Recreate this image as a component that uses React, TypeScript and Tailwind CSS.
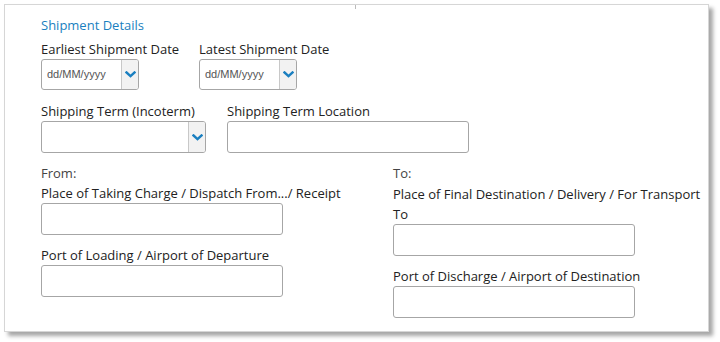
import React from "react";

function Chevron() {
    return (
        <svg width="11" height="7" viewBox="0 0 11 7" fill="none">
            <path d="M1.5 1.5 L5.5 5.2 L9.5 1.5" stroke="#1a7fc0" strokeWidth="2.4" strokeLinecap="square" />
        </svg>
    );
}

function Label({ children, className = "" }: { children: React.ReactNode; className?: string }) {
    return <div className={`text-[13px] font-medium leading-[20px] text-[#222] ${className}`}>{children}</div>;
}

function DateInput() {
    return (
        <div className="flex h-[31px] w-[98px] overflow-hidden rounded-[3px] border border-[#a6a6a6] bg-white">
            <div className="flex flex-1 items-center pl-[5px] font-['Liberation_Sans',sans-serif] text-[11px] text-[#555]">
                dd/MM/yyyy
            </div>
            <div className="flex w-[17px] items-center justify-center border-l border-[#c8c8c8] bg-[#f2f2f2]">
                <Chevron />
            </div>
        </div>
    );
}

function SelectInput() {
    return (
        <div className="flex h-[32px] w-[165px] overflow-hidden rounded-[3px] border border-[#a6a6a6] bg-white">
            <div className="flex-1" />
            <div className="flex w-[17px] items-center justify-center border-l border-[#c8c8c8] bg-[#f2f2f2]">
                <Chevron />
            </div>
        </div>
    );
}

function TextInput() {
    return <div className="h-[32px] w-[242px] rounded-[3px] border border-[#a6a6a6] bg-white" />;
}

export default function App() {
    return (
        <div className="h-[342px] w-[720px] bg-white pl-[4px] pt-[4px] font-['Open_Sans',sans-serif]">
            <div className="relative h-[328px] w-[705px] border border-[#d6d6d6] bg-white pl-[36px] pt-[10px] shadow-[4px_4px_4px_rgba(0,0,0,0.35)]">
                {/* small tick on top edge */}
                <div className="absolute left-[350px] top-0 h-[4px] w-px bg-[#bbb]" />

                <div className="text-[13px] font-medium leading-[20px] text-[#1a7fc0]">Shipment Details</div>

                <div className="mt-[4px] flex">
                    <div className="w-[158px]">
                        <Label>Earliest Shipment Date</Label>
                        <DateInput />
                    </div>
                    <div>
                        <Label>Latest Shipment Date</Label>
                        <DateInput />
                    </div>
                </div>

                <div className="mt-[11px] flex gap-[21px]">
                    <div>
                        <Label>Shipping Term (Incoterm)</Label>
                        <SelectInput />
                    </div>
                    <div>
                        <Label>Shipping Term Location</Label>
                        <TextInput />
                    </div>
                </div>

                <div className="mt-[10px] flex">
                    <div className="w-[352px]">
                        <Label className="font-normal text-[#444]">From:</Label>
                        <Label>Place of Taking Charge / Dispatch From.../ Receipt</Label>
                        <TextInput />
                        <Label className="mt-[10px]">Port of Loading / Airport of Departure</Label>
                        <TextInput />
                    </div>
                    <div className="w-[310px]">
                        <Label className="font-normal text-[#444]">To:</Label>
                        <Label className="mt-px">Place of Final Destination / Delivery / For Transport To</Label>
                        <TextInput />
                        <Label className="mt-[10px]">Port of Discharge / Airport of Destination</Label>
                        <TextInput />
                    </div>
                </div>
            </div>
        </div>
    );
}
